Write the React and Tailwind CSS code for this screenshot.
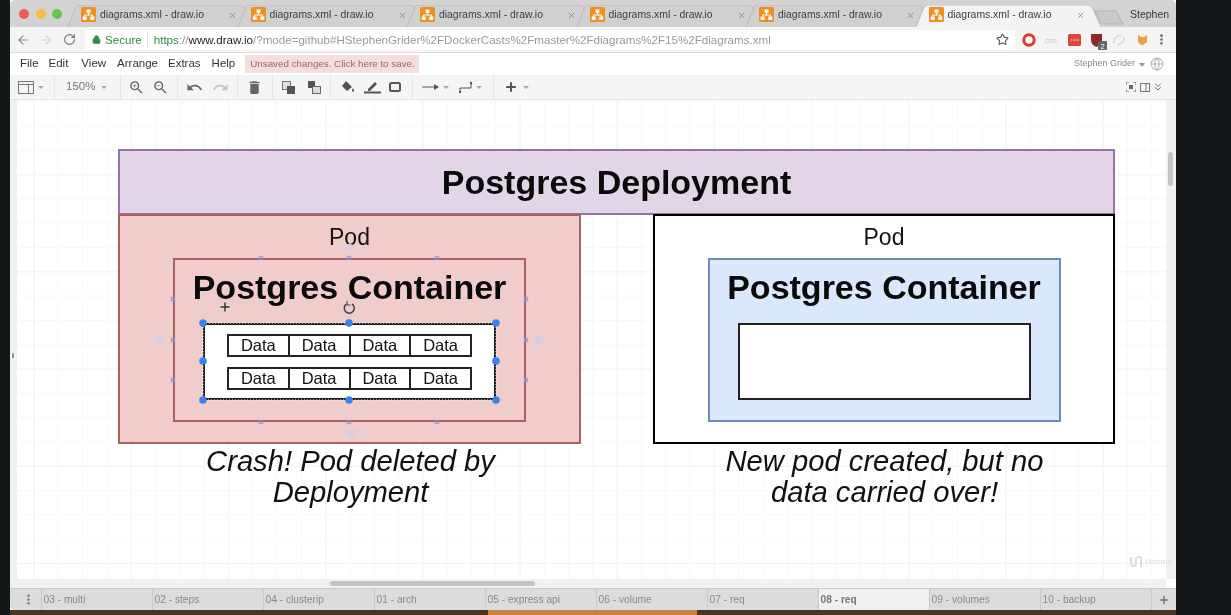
import { ArrowLeft, ArrowRight, RotateCw, Star, Lock, Plus, ChevronsDown, EllipsisVertical, Globe, X } from 'lucide-react';
import { MdUndo, MdRedo, MdZoomIn, MdZoomOut, MdDelete } from 'react-icons/md';

const pages = ['03 - multi', '02 - steps', '04 - clusterip', '01 - arch', '05 - express api', '06 - volume', '07 - req', '08 - req', '09 - volumes', '10 - backup'];

function Logo() {
  return (
    <svg width="15" height="15" viewBox="0 0 15 15" className="shrink-0">
      <rect width="15" height="15" rx="1.5" fill="#ef8f21" />
      <path d="M7.5 5.5V8M3.5 10.5V8h8v2.5" stroke="#fff" strokeWidth="1" fill="none" />
      <rect x="5.5" y="2.5" width="4" height="3.4" fill="#fff" />
      <rect x="1.7" y="9.5" width="4" height="3.4" fill="#fff" />
      <rect x="9.3" y="9.5" width="4" height="3.4" fill="#fff" />
    </svg>
  );
}

function Tab({ active }) {
  return (
    <div className={`relative w-[169.5px] h-[27px] shrink-0 ${active ? 'z-10' : ''}`}>
      <svg width="186" height="22" viewBox="0 0 186 22" className="absolute left-[-8px] top-[5px]">
        <path d="M0 22 L8 2 Q9 0 12 0 H172 Q175 0 176 2 L185 22" fill={active ? '#f3f3f3' : '#d0d0d0'} stroke="#bbb" />
      </svg>
      <div className="relative flex items-center h-[27px] pt-[2px] pl-[5px]">
        <Logo />
        <span className="ml-[4px] text-[10.4px] text-[#3c3c3c] whitespace-nowrap">diagrams.xml - draw.io</span>
        <X size={9} strokeWidth={2} className="absolute left-[152px] top-[11px] text-[#777]" />
      </div>
    </div>
  );
}

function TabStrip() {
  return (
    <div className="relative flex h-[27px] bg-[#d3d3d3] shrink-0 rounded-t-[5px] overflow-hidden">
      <div className="flex items-center w-[66px] shrink-0 pl-[9px] gap-[6.5px]">
        <span className="w-[10px] h-[10px] rounded-full bg-[#ee5f58]" />
        <span className="w-[10px] h-[10px] rounded-full bg-[#f7bd45]" />
        <span className="w-[10px] h-[10px] rounded-full bg-[#5fc654]" />
      </div>
      <Tab />
      <Tab />
      <Tab />
      <Tab />
      <Tab />
      <Tab active />
      <svg width="32" height="16" viewBox="0 0 32 16" className="absolute left-[1084px] top-[10px]">
        <path d="M1 1 H22 L29 14 H7 Z" fill="#c9c9c9" stroke="#b4b4b4" />
      </svg>
      <span className="absolute left-[1120px] top-[7px] text-[10.5px] text-[#333]">Stephen</span>
    </div>
  );
}

function AddressBar() {
  return (
    <div className="flex items-center h-[26px] bg-[#f4f4f4] shrink-0 border-b border-[#dcdcdc]">
      <ArrowLeft size={14} className="ml-[6px] text-[#888]" />
      <ArrowRight size={14} className="ml-[9px] text-[#d4d4d4]" />
      <RotateCw size={13} className="ml-[10px] text-[#777]" />
      <div className="flex items-center ml-[9px] w-[930px] h-[20px] bg-white rounded-[2px] text-[11.6px]">
        <Lock size={9} fill="#2e8b46" strokeWidth={2.5} className="ml-[7px] text-[#2e8b46]" />
        <span className="ml-[4px] text-[#2e8b46]">Secure</span>
        <span className="ml-[5px] w-px h-[14px] bg-[#ddd]" />
        <span className="ml-[6px] whitespace-nowrap text-[#999]">
          <span className="text-[#2e8b46]">https</span>://<span className="text-[#222]">www.draw.io</span>/?mode=github#HStephenGrider%2FDockerCasts%2Fmaster%2Fdiagrams%2F15%2Fdiagrams.xml
        </span>
        <Star size={13} className="ml-auto mr-[6px] text-[#555]" />
      </div>
      <svg width="132" height="20" viewBox="0 0 132 20" className="ml-[4px]">
        <circle cx="10" cy="10" r="5.2" fill="#fff" stroke="#e0392f" strokeWidth="3" />
        <text x="26" y="13" fontSize="8" fill="#c8c8c8">css</text>
        <rect x="49" y="4" width="13" height="12" rx="1.5" fill="#d9483b" />
        <path d="M52 10h1.5M55 10h1.5M58 10h1.5" stroke="#fff" />
        <path d="M72 4h11v6q0 5-5.5 7q-5.5-2-5.5-7z" fill="#8d2a25" />
        <rect x="79" y="11" width="9" height="9" rx="1" fill="#666" />
        <text x="81.5" y="18.5" fontSize="7.5" fill="#fff">2</text>
        <path d="M95 13q-1-6 7-8M105 7q1 6-7 8" stroke="#dedede" strokeWidth="2" fill="none" />
        <path d="M119 5l3 2h3l3-2v7l-4 3h-2l-3-3z" fill="#e8a33c" />
      </svg>
      <EllipsisVertical size={13} strokeWidth={3} className="ml-[4px] text-[#666]" />
    </div>
  );
}

function MenuBar() {
  return (
    <div className="flex items-center h-[22px] bg-white shrink-0 pl-[10px] text-[11.5px] text-[#333]">
      <span>File</span>
      <span className="ml-[10px]">Edit</span>
      <span className="ml-[13px]">View</span>
      <span className="ml-[11px]">Arrange</span>
      <span className="ml-[10px]">Extras</span>
      <span className="ml-[11px]">Help</span>
      <span className="ml-[10px] h-[18px] w-[174px] rounded-[2px] bg-[#f2dede] text-[#b0605c] text-[9.8px] leading-[17px] pl-[5px] whitespace-nowrap">Unsaved changes. Click here to save.</span>
      <span className="ml-auto text-[9px] text-[#888]">Stephen Grider</span>
      <span className="ml-[4px] mt-[1px] border-x-[3.5px] border-x-transparent border-t-[4px] border-t-[#999]" />
      <Globe size={14} className="ml-[5px] mr-[12px] text-[#bbb]" />
    </div>
  );
}

function Caret({ className = '' }) {
  return <span className={`inline-block border-x-[3px] border-x-transparent border-t-[3.5px] border-t-[#aaa] ${className}`} />;
}

function Divider({ className = '' }) {
  return <span className={`w-px h-[25px] bg-[#e6e6e6] ${className}`} />;
}

function Toolbar() {
  return (
    <div className="flex items-center h-[25px] bg-[#f5f5f5] shrink-0 border-b border-[#e2e2e2] text-[#666]">
      <svg width="16" height="13" viewBox="0 0 16 13" className="ml-[8px]">
        <rect x=".5" y=".5" width="15" height="12" fill="none" stroke="#777" />
        <path d="M.5 3.5h15M10.5 3.5v9" stroke="#777" />
      </svg>
      <Caret className="ml-[4px]" />
      <Divider className="ml-[10px]" />
      <span className="ml-[11px] text-[11.5px] text-[#777] w-[29px]">150%</span>
      <Caret className="ml-[6px]" />
      <Divider className="ml-[13px]" />
      <MdZoomIn size={17} className="ml-[7px]" />
      <MdZoomOut size={17} className="ml-[7px]" />
      <Divider className="ml-[8px]" />
      <MdUndo size={17} className="ml-[8px]" />
      <MdRedo size={17} className="ml-[9px] text-[#c4c4c4]" />
      <Divider className="ml-[8px]" />
      <MdDelete size={17} className="ml-[8px]" />
      <Divider className="ml-[9px]" />
      <svg width="14" height="13" viewBox="0 0 14 13" className="ml-[9px]">
        <rect x=".5" y=".5" width="8" height="8" fill="#ddd" stroke="#777" />
        <rect x="5" y="5" width="8" height="8" fill="#555" />
      </svg>
      <svg width="14" height="13" viewBox="0 0 14 13" className="ml-[11px]">
        <rect x="1" y="0" width="7" height="7" fill="#555" />
        <rect x="5.5" y="5.5" width="8" height="7" fill="#ddd" stroke="#666" />
      </svg>
      <Divider className="ml-[9px]" />
      <svg width="15" height="14" viewBox="0 0 15 14" className="ml-[9px]">
        <path d="M6 1l6 6-5 4-5-5z" fill="#555" />
        <path d="M13 8q2 3 0 4q-2-1 0-4" fill="#555" />
      </svg>
      <svg width="17" height="14" viewBox="0 0 17 14" className="ml-[9px]">
        <path d="M4 9l7-7 2 2-7 7H4z" fill="#555" />
        <path d="M0 12.5h17" stroke="#555" strokeWidth="2" />
      </svg>
      <svg width="13" height="11" viewBox="0 0 13 11" className="ml-[8px]">
        <rect x="1" y="1" width="10" height="8" rx="1.5" fill="none" stroke="#555" strokeWidth="2" />
      </svg>
      <Divider className="ml-[10px]" />
      <svg width="17" height="6" viewBox="0 0 17 6" className="ml-[9px]">
        <path d="M0 3h13" stroke="#555" />
        <path d="M17 3l-5-3v6z" fill="#555" />
      </svg>
      <Caret className="ml-[4px]" />
      <svg width="14" height="13" viewBox="0 0 14 13" className="ml-[10px]">
        <path d="M1 12V7h11V2" fill="none" stroke="#555" />
        <circle cx="1" cy="11" r="1.2" fill="#555" />
        <circle cx="12" cy="2" r="1.2" fill="#555" />
      </svg>
      <Caret className="ml-[3px]" />
      <Divider className="ml-[11px]" />
      <Plus size={14} strokeWidth={3.4} className="ml-[10px] text-[#555]" />
      <Caret className="ml-[5px]" />
      <svg width="10" height="10" viewBox="0 0 10 10" className="ml-auto">
        <path d="M0 3V0h3M7 0h3v3M10 7v3H7M3 10H0V7" fill="none" stroke="#666" />
        <rect x="3" y="3" width="4" height="4" fill="#666" />
      </svg>
      <svg width="10" height="9" viewBox="0 0 10 9" className="ml-[4px]">
        <rect x=".5" y=".5" width="9" height="8" fill="none" stroke="#777" />
        <path d="M6 .5v8" stroke="#777" />
      </svg>
      <ChevronsDown size={12} className="ml-[2px] mr-[12px] text-[#777]" />
    </div>
  );
}

function DataRow() {
  return (
    <div className="flex w-[245px] h-[23px] border-2 border-[#222] bg-white">
      <span className="flex-1 text-center leading-[19px] text-[16.5px] text-[#111]">Data</span>
      <span className="flex-1 text-center leading-[19px] text-[16.5px] text-[#111] border-l-2 border-[#222]">Data</span>
      <span className="flex-1 text-center leading-[19px] text-[16.5px] text-[#111] border-l-2 border-[#222]">Data</span>
      <span className="flex-1 text-center leading-[19px] text-[16.5px] text-[#111] border-l-2 border-[#222]">Data</span>
    </div>
  );
}

// selection handles and move arrows, canvas coordinates
function SelectionOverlay() {
  const marks = [
    [244, 158], [332, 158], [420, 158], [244, 322], [332, 322], [420, 322],
    [156, 199], [156, 240], [156, 280], [509, 199], [509, 240], [509, 280],
  ];
  const dots = [];
  [186, 332, 479].forEach((x) => [223, 261, 300].forEach((y) => {
    if (x !== 332 || y !== 261) dots.push([x, y]);
  }));
  return (
    <svg width="1149" height="479" viewBox="0 0 1149 479" className="absolute left-0 top-0 pointer-events-none">
      <path d="M186 223H479V300H186Z" fill="none" stroke="#fff" strokeWidth="1" strokeDasharray="1 2" />
      {marks.map(([x, y]) => (
        <path key={`${x}-${y}`} d={`M${x - 2} ${y - 2}l4 4m0-4l-4 4`} stroke="#8a95cf" strokeWidth="1.4" />
      ))}
      {dots.map(([x, y]) => (
        <circle key={`${x}-${y}`} cx={x} cy={y} r="3.8" fill="#3b82f0" />
      ))}
      <path d="M146 233v14l-9-7zM518 233v14l10-7zM325 149h16l-8-6zM325 330h16l-8 10z" fill="#d6cfe2" />
      <circle cx="208" cy="207" r="5" fill="#ddd" opacity=".6" />
      <path d="M203.5 207h9M208 202.5v9" stroke="#333" strokeWidth="1.5" />
      <path d="M335 204a5 5 0 1 1-5.5 0" fill="none" stroke="#444" strokeWidth="1.5" />
      <path d="M330 201v4h3.5" fill="none" stroke="#444" />
    </svg>
  );
}

function Canvas() {
  return (
    <div className="flex flex-1 min-h-0 bg-[#f1f1f1]">
      <div className="relative w-[7px] shrink-0">
        <span className="absolute left-[2px] top-[253px] w-[2px] h-[5px] bg-[#999]" />
      </div>
      <div className="relative flex-1 bg-white bg-[linear-gradient(#f3f3f3_1px,transparent_1px),linear-gradient(90deg,#f3f3f3_1px,transparent_1px),linear-gradient(#f8f8f8_1px,transparent_1px),linear-gradient(90deg,#f8f8f8_1px,transparent_1px)] bg-[size:97.2px_97.2px,97.2px_97.2px,24.3px_24.3px,24.3px_24.3px] bg-[position:16.6px_74.2px,16.6px_74.2px,16.6px_1.3px,16.6px_1.3px]">
        <div className="absolute left-[101px] top-[49px] w-[997px] h-[66px] flex items-center justify-center bg-[#e1d5e7] border-2 border-[#9673a6] text-[34px] font-bold text-[#0a0a0a]">
          Postgres Deployment
        </div>

        <div className="absolute left-[101px] top-[114px] w-[463px] h-[230px] flex flex-col items-center bg-[#f0cdca] border-2 border-[#a9625d] pt-[6px]">
          <span className="text-[23px] leading-[30px] text-[#111]">Pod</span>
          <div className="flex flex-col items-center mt-[6px] w-[353px] h-[164px] border-2 border-[#a9625d] pt-[7px]">
            <span className="text-[34px] leading-[40px] font-bold text-[#0a0a0a] whitespace-nowrap">Postgres Container</span>
            <div className="flex flex-col items-center gap-[10px] mt-[16px] w-[293px] h-[77px] bg-white border-2 border-[#222] pt-[9px]">
              <DataRow />
              <DataRow />
            </div>
          </div>
        </div>

        <div className="absolute left-[636px] top-[114px] w-[462px] h-[230px] flex flex-col items-center bg-white border-2 border-black pt-[6px]">
          <span className="text-[23px] leading-[30px] text-[#111]">Pod</span>
          <div className="flex flex-col items-center mt-[6px] w-[353px] h-[164px] bg-[#dae8fc] border-2 border-[#6c8ebf] pt-[7px]">
            <span className="text-[34px] leading-[40px] font-bold text-[#0a0a0a] whitespace-nowrap">Postgres Container</span>
            <div className="mt-[16px] w-[293px] h-[77px] bg-white border-2 border-[#222]" />
          </div>
        </div>

        <p className="absolute left-[102px] top-[346px] w-[463px] text-center text-[29.2px] leading-[31px] italic text-[#111]">Crash! Pod deleted by<br />Deployment</p>
        <p className="absolute left-[636px] top-[346px] w-[463px] text-center text-[29.2px] leading-[31px] italic text-[#111]">New pod created, but no<br />data carried over!</p>

        <SelectionOverlay />

        <div className="absolute right-[-6px] bottom-[11px] z-10 flex items-center gap-[2px] text-[8px] font-bold text-[#e4e4e4]">
          <svg width="14" height="12" viewBox="0 0 14 12">
            <path d="M2 1v6q0 3 2.5 3T7 7V3q0-2 2.5-2T12 3v8" fill="none" stroke="#ddd" strokeWidth="2" />
          </svg>
          <span>Udemy</span>
        </div>
      </div>
      <div className="relative w-[10px] shrink-0">
        <span className="absolute left-[2px] top-[52px] w-[5px] h-[34px] rounded-full bg-[#c4c4c4]" />
      </div>
    </div>
  );
}

function HScroll() {
  return (
    <div className="relative h-[9px] shrink-0 bg-[#f1f1f1]">
      <span className="absolute left-[320px] top-[2px] w-[205px] h-[5px] rounded-full bg-[#c4c4c4]" />
      <span className="absolute right-0 top-0 w-[10px] h-[9px] bg-white" />
    </div>
  );
}

function PageTabs() {
  return (
    <div className="flex h-[22px] shrink-0 bg-[#dcdcdc] border-t border-[#c9c9c9] rounded-bl-[5px] pl-[6px] text-[10.2px] text-[#888]">
      <div className="flex items-center justify-center w-[24.5px] shrink-0">
        <EllipsisVertical size={13} strokeWidth={2.8} className="text-[#777]" />
      </div>
      {pages.map((name, i) => (
        <div
          key={name}
          className={`flex items-center w-[111px] shrink-0 pl-[2px] border-l border-[#c9c9c9] ${i === 7 ? 'bg-[#f0f0f0] font-bold text-[#777]' : ''}`}
        >
          {name}
        </div>
      ))}
      <div className="flex flex-1 items-center justify-center border-l border-[#c9c9c9]">
        <Plus size={12} strokeWidth={3} className="text-[#777]" />
      </div>
    </div>
  );
}

export default function App() {
  return (
    <div className="flex flex-col w-[1231px] h-[615px] overflow-hidden bg-[#14181b] font-['Liberation_Sans',Arial,sans-serif] blur-[0.4px]">
      <div className="flex flex-col w-[1166px] h-[610px] ml-[10px] shrink-0 bg-white">
        <TabStrip />
        <AddressBar />
        <MenuBar />
        <Toolbar />
        <Canvas />
        <HScroll />
        <PageTabs />
      </div>
      <div className="flex w-[1166px] h-[5px] ml-[10px] bg-[#4a3422]">
        <span className="ml-[478px] w-[209px] bg-[#c98242]" />
      </div>
    </div>
  );
}
